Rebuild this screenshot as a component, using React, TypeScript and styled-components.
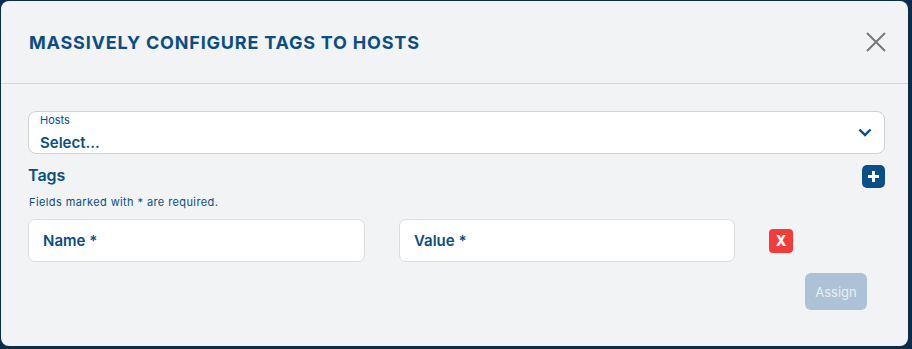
import * as React from 'react';
import styled, { createGlobalStyle } from 'styled-components';

const GlobalStyle = createGlobalStyle`
    html, body {
        margin: 0;
        padding: 0;
        background: #0b2d4b;
        font-family: Inter, sans-serif;
    }
`;

const Backdrop = styled.div`
    width: 912px;
    height: 349px;
    box-sizing: border-box;
    padding: 1px 4px 3px 1px;
    background: #0b2d4b;
`;

const Modal = styled.div`
    height: 100%;
    background: #f2f3f5;
    border-radius: 8px;
    display: flex;
    flex-direction: column;
`;

const Header = styled.div`
    height: 83px;
    box-sizing: border-box;
    display: flex;
    align-items: center;
    justify-content: space-between;
    padding: 0 20px 0 28px;
    border-bottom: 1px solid #d5d7da;
`;

const Title = styled.h1`
    margin: 0;
    font-size: 18px;
    font-weight: 700;
    letter-spacing: 0.8px;
    color: #0a4e84;
`;

const CloseButton = styled.button`
    border: 0;
    background: transparent;
    padding: 0;
    width: 24px;
    height: 24px;
    display: flex;
    align-items: center;
    justify-content: center;
    cursor: pointer;
`;

const Body = styled.div`
    padding: 27px 23px 0 27px;
    display: flex;
    flex-direction: column;
`;

const SelectBox = styled.div`
    height: 43px;
    box-sizing: border-box;
    border: 1px solid #cfd1d4;
    border-radius: 8px;
    background: #fff;
    display: flex;
    justify-content: space-between;
    padding: 0 12px 0 11px;

    svg {
        align-self: center;
    }
`;

const SelectText = styled.div`
    display: flex;
    flex-direction: column;
    padding-top: 2px;
`;

const SmallLabel = styled.span`
    font-size: 11px;
    color: #0a4e84;
    line-height: 13px;
`;

const SelectValue = styled.span`
    font-size: 15px;
    font-weight: 600;
    color: #0a4e84;
    line-height: 20px;
    margin-top: 6px;
`;

const TagsRow = styled.div`
    display: flex;
    align-items: center;
    justify-content: space-between;
    margin-top: 11px;
`;

const SectionTitle = styled.span`
    font-size: 16px;
    font-weight: 600;
    color: #0a4e84;
    margin-top: -4px;
`;

const IconButton = styled.button<{ $tone: 'blue' | 'red' }>`
    border: 0;
    padding: 0;
    width: ${p => (p.$tone === 'blue' ? '23px' : '24px')};
    height: ${p => (p.$tone === 'blue' ? '23px' : '24px')};
    border-radius: ${p => (p.$tone === 'blue' ? '5px' : '4px')};
    background: ${p => (p.$tone === 'blue' ? '#0b4f86' : '#f23b3b')};
    color: #fff;
    display: flex;
    align-items: center;
    justify-content: center;
    font-family: Inter, sans-serif;
    font-weight: 800;
    font-size: 14px;
`;

const Note = styled.p`
    margin: 7px 0 0 1px;
    font-size: 11px;
    letter-spacing: 0.4px;
    color: #0a4e84;
`;

const FieldRow = styled.div`
    display: grid;
    grid-template-columns: 337px 336px 24px;
    column-gap: 34px;
    align-items: center;
    margin-top: 10px;
`;

const TextField = styled.div`
    height: 43px;
    box-sizing: border-box;
    border: 1px solid #dadcdf;
    border-radius: 7px;
    background: #fff;
    display: flex;
    align-items: center;
    padding-left: 14px;
    font-size: 15px;
    font-weight: 600;
    color: #0a4e84;
`;

const Footer = styled.div`
    display: flex;
    justify-content: flex-end;
    padding-right: 18px;
    margin-top: 11px;
`;

const AssignButton = styled.button`
    width: 62px;
    height: 37px;
    border: 0;
    border-radius: 6px;
    background: #adc2d6;
    color: #e9eef3;
    font-family: Inter, sans-serif;
    font-size: 13px;
`;

const App: React.FC = () => {
    return (
        <Backdrop>
            <GlobalStyle />
            <Modal>
                <Header>
                    <Title>MASSIVELY CONFIGURE TAGS TO HOSTS</Title>
                    <CloseButton aria-label="close">
                        <svg width="20" height="20" viewBox="0 0 20 20">
                            <path d="M1 1 L19 19 M19 1 L1 19" stroke="#777" strokeWidth="2" />
                        </svg>
                    </CloseButton>
                </Header>
                <Body>
                    <SelectBox>
                        <SelectText>
                            <SmallLabel>Hosts</SmallLabel>
                            <SelectValue>Select...</SelectValue>
                        </SelectText>
                        <svg width="14" height="9" viewBox="0 0 14 9">
                            <path d="M1.5 1.5 L7 7 L12.5 1.5" stroke="#0a4e84" strokeWidth="2.4" fill="none" />
                        </svg>
                    </SelectBox>
                    <TagsRow>
                        <SectionTitle>Tags</SectionTitle>
                        <IconButton $tone="blue" aria-label="add">
                            <svg width="13" height="13" viewBox="0 0 13 13">
                                <path d="M6.5 1 V12 M1 6.5 H12" stroke="#fff" strokeWidth="3" />
                            </svg>
                        </IconButton>
                    </TagsRow>
                    <Note>Fields marked with * are required.</Note>
                    <FieldRow>
                        <TextField>Name *</TextField>
                        <TextField>Value *</TextField>
                        <IconButton $tone="red">X</IconButton>
                    </FieldRow>
                    <Footer>
                        <AssignButton>Assign</AssignButton>
                    </Footer>
                </Body>
            </Modal>
        </Backdrop>
    );
};

export default App;
